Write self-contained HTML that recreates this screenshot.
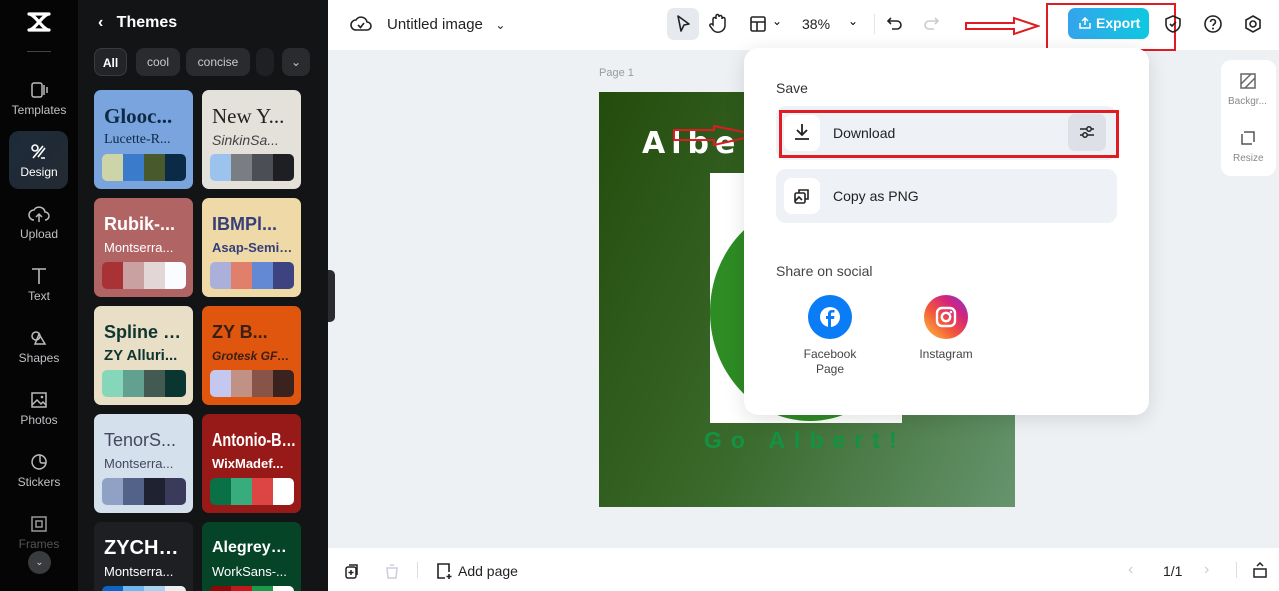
<!DOCTYPE html>
<html style="overflow:hidden;height:591px"><head><meta charset="utf-8"><style>
*{box-sizing:border-box;margin:0;padding:0}
body{width:1279px;height:591px;overflow:hidden;position:relative;font-family:"Liberation Sans",sans-serif;background:#eef1f4}
.a{position:absolute}
.rail{left:0;top:0;width:78px;height:591px;background:#050505}
.ri{position:absolute;left:0;width:78px;text-align:center;color:#bfc1c6;font-size:12px}
.ri svg{display:block;margin:0 auto 3px}
.panel{left:78px;top:0;width:250px;height:591px;background:#131416;overflow:hidden}
.chip{position:absolute;top:48px;height:28px;border-radius:8px;background:#2a2b2f;color:#c9cacd;font-size:12px;line-height:28px;text-align:center}
.card{position:absolute;width:99px;height:99px;border-radius:7px;overflow:hidden;padding:14px 8px 0 10px}
.card .t{font-size:18px;font-weight:bold;white-space:nowrap;overflow:hidden;text-overflow:ellipsis;line-height:24px}
.card .s{font-size:13px;white-space:nowrap;overflow:hidden;text-overflow:ellipsis;line-height:20px;margin-top:2px}
.sw{position:absolute;left:8px;top:64px;width:84px;height:27px;border-radius:5px;overflow:hidden;display:flex}
.sw i{flex:1}
.top{left:328px;top:0;width:951px;height:50px;background:#fff}
.bot{left:328px;top:548px;width:951px;height:43px;background:#fff}
.row{position:absolute;left:776px;width:341px;height:54px;background:#eef1f5;border-radius:10px}
.ib{position:absolute;left:8px;top:9px;width:36px;height:36px;background:#fff;border-radius:8px}
</style></head><body>
<div class="a rail">
 <svg class="a" style="left:27px;top:11px" width="24" height="22" viewBox="0 0 24 22"><path d="M2 3h20M2 19h20M2 3c6 0 14 16 20 16M22 3C16 3 8 19 2 19" stroke="#fff" stroke-width="3.2" fill="none" stroke-linecap="round"/></svg>
 <div class="a" style="left:27px;top:51px;width:24px;height:1px;background:#444"></div>
 <div class="ri" style="top:80px"><svg width="20" height="20" viewBox="0 0 20 20"><rect x="3" y="3" width="10" height="14" rx="2" stroke="#bbb" fill="none" stroke-width="1.5"/><path d="M15 5v10M18 7v6" stroke="#bbb" stroke-width="1.5"/></svg>Templates</div>
 <div class="a" style="left:9px;top:131px;width:59px;height:58px;border-radius:10px;background:linear-gradient(135deg,#1c2b3a,#242a32)"></div>
 <div class="ri" style="top:142px;color:#fff"><svg width="20" height="20" viewBox="0 0 20 20"><circle cx="6" cy="6" r="3" stroke="#fff" fill="none" stroke-width="1.6"/><path d="M9 15l7-9M4 16l10-12M12 16l4 0" stroke="#fff" stroke-width="1.6" fill="none"/></svg>Design</div>
 <div class="ri" style="top:204px"><svg width="22" height="20" viewBox="0 0 22 20"><path d="M6 16a5 5 0 010-10 6 6 0 0111 2 4 4 0 010 8M11 10v8M8 13l3-3 3 3" stroke="#bbb" fill="none" stroke-width="1.5"/></svg>Upload</div>
 <div class="ri" style="top:266px"><svg width="20" height="20" viewBox="0 0 20 20"><path d="M3 3h14M10 3v15" stroke="#bbb" stroke-width="1.6"/></svg>Text</div>
 <div class="ri" style="top:328px"><svg width="20" height="20" viewBox="0 0 20 20"><circle cx="7" cy="8" r="4" stroke="#bbb" fill="none" stroke-width="1.5"/><path d="M10 6l6 10H6z" stroke="#bbb" fill="none" stroke-width="1.5"/></svg>Shapes</div>
 <div class="ri" style="top:390px"><svg width="20" height="20" viewBox="0 0 20 20"><rect x="3" y="3" width="14" height="14" stroke="#bbb" fill="none" stroke-width="1.5"/><path d="M3 15l5-5 4 4 2-2 3 3" stroke="#bbb" fill="none" stroke-width="1.5"/><circle cx="13" cy="7" r="1.3" fill="#bbb"/></svg>Photos</div>
 <div class="ri" style="top:452px"><svg width="20" height="20" viewBox="0 0 20 20"><path d="M17 11A7 7 0 1111 3a7 7 0 016 8zM17 11h-4a2 2 0 01-2-2V3" stroke="#bbb" fill="none" stroke-width="1.5"/></svg>Stickers</div>
 <div class="ri" style="top:514px;color:#555"><svg width="20" height="20" viewBox="0 0 20 20"><rect x="3" y="3" width="14" height="14" stroke="#999" fill="none" stroke-width="1.5"/><rect x="7" y="7" width="6" height="6" stroke="#999" fill="none" stroke-width="1.5"/></svg>Frames</div>
 <div class="a" style="left:28px;top:551px;width:23px;height:23px;border-radius:50%;background:#3a3b3f;color:#ccc;font-size:10px;text-align:center;line-height:23px">&#8964;</div>
</div>
<div class="a panel">
 <div class="a" style="left:20px;top:14px;color:#fff;font-size:16px;font-weight:bold">&lsaquo;&nbsp;&nbsp; Themes</div>
 <div class="chip" style="left:16px;width:33px;background:#232428;border:1px solid #3a3b3f;color:#fff;font-weight:bold">All</div>
 <div class="chip" style="left:58px;width:44px">cool</div>
 <div class="chip" style="left:108px;width:64px">concise</div>
 <div class="chip" style="left:178px;width:18px;background:#1f2023"></div>
 <div class="chip" style="left:204px;width:28px">&#8964;</div>
 <div class="card" style="left:16px;top:90px;background:#79a4dd;color:#0f2a46"><div class="t" style="font-family:'Liberation Serif',serif;font-size:21px">Glooc...</div><div class="s" style="font-family:'Liberation Serif',serif;font-size:14px">Lucette-R...</div><div class="sw"><i style="background:#ccd4a8"></i><i style="background:#3a7bcb"></i><i style="background:#485a2b"></i><i style="background:#0b2a45"></i></div></div>
 <div class="card" style="left:124px;top:90px;background:#e4e0da;color:#222"><div class="t" style="font-family:'Liberation Serif',serif;font-weight:normal;font-size:21px">New Y...</div><div class="s" style="font-style:italic;color:#444;font-size:14px">SinkinSa...</div><div class="sw"><i style="background:#9cc3ee"></i><i style="background:#7a7d82"></i><i style="background:#4b4e54"></i><i style="background:#1d1f23"></i></div></div>
 <div class="card" style="left:16px;top:198px;background:#b16464;color:#fff"><div class="t">Rubik-...</div><div class="s">Montserra...</div><div class="sw"><i style="background:#a93237"></i><i style="background:#c9a1a1"></i><i style="background:#e3d6d6"></i><i style="background:#fbfcff"></i></div></div>
 <div class="card" style="left:124px;top:198px;background:#eed9a7;color:#363f7a"><div class="t">IBMPl...</div><div class="s" style="font-weight:bold">Asap-SemiB...</div><div class="sw"><i style="background:#aab0d9"></i><i style="background:#e17f6d"></i><i style="background:#6489d4"></i><i style="background:#3c4380"></i></div></div>
 <div class="card" style="left:16px;top:306px;background:#e8dfc6;color:#0f3530"><div class="t">Spline S...</div><div class="s" style="font-weight:bold;font-size:15px">ZY Alluri...</div><div class="sw"><i style="background:#86d6b9"></i><i style="background:#62a08f"></i><i style="background:#425a52"></i><i style="background:#0b3530"></i></div></div>
 <div class="card" style="left:124px;top:306px;background:#e0560e;color:#3a1f14"><div class="t">ZY B...</div><div class="s" style="font-style:italic;font-weight:bold;font-size:12px">Grotesk GF-B...</div><div class="sw"><i style="background:#c5c8ee"></i><i style="background:#c29185"></i><i style="background:#875447"></i><i style="background:#3a231e"></i></div></div>
 <div class="card" style="left:16px;top:414px;background:#d4e0ec;color:#44485e"><div class="t" style="font-weight:normal">TenorS...</div><div class="s">Montserra...</div><div class="sw"><i style="background:#8fa2c5"></i><i style="background:#536288"></i><i style="background:#1f2230"></i><i style="background:#3a3b5b"></i></div></div>
 <div class="card" style="left:124px;top:414px;background:#981a18;color:#fff;padding-right:2px"><div class="t" style="font-size:18px;transform:scaleX(.8);transform-origin:left;width:110px">Antonio-Bold</div><div class="s" style="font-weight:bold">WixMadef...</div><div class="sw"><i style="background:#0a7045"></i><i style="background:#38ac7c"></i><i style="background:#dd4545"></i><i style="background:#fff"></i></div></div>
 <div class="card" style="left:16px;top:522px;background:#1d1f22;color:#fff"><div class="t" style="font-size:20px">ZYCHE...</div><div class="s">Montserra...</div><div class="sw"><i style="background:#0a66c2"></i><i style="background:#6cb7ef"></i><i style="background:#a8d2f2"></i><i style="background:#eee"></i></div></div>
 <div class="card" style="left:124px;top:522px;background:#064428;color:#fff"><div class="t" style="font-size:16px">AlegreyaS...</div><div class="s">WorkSans-...</div><div class="sw"><i style="background:#8a0a0a"></i><i style="background:#c01a1a"></i><i style="background:#1b9a4b"></i><i style="background:#fff"></i></div></div>
</div>
<div class="a" style="left:328px;top:270px;width:7px;height:52px;background:#2a2b2f;border-radius:0 5px 5px 0"></div>
<div class="a top">
 <svg class="a" style="left:22px;top:14px" width="22" height="20" viewBox="0 0 22 20"><path d="M6 16a5 5 0 010-10 6 6 0 0111 2 4 4 0 010 8z" stroke="#222" fill="none" stroke-width="1.6"/><path d="M8 11l2.5 2.5L14 9" stroke="#222" fill="none" stroke-width="1.6"/></svg>
 <div class="a" style="left:59px;top:16px;font-size:15px;color:#222">Untitled image &nbsp;&nbsp;<span style="font-size:12px">&#8964;</span></div>
 <div class="a" style="left:339px;top:8px;width:32px;height:32px;border-radius:7px;background:#e6e9ee"></div>
 <svg class="a" style="left:346px;top:14px" width="18" height="20" viewBox="0 0 18 20"><path d="M4 2l11 8-5 1-3 6z" stroke="#222" fill="none" stroke-width="1.6" stroke-linejoin="round"/></svg>
 <svg class="a" style="left:380px;top:13px" width="20" height="22" viewBox="0 0 20 22"><path d="M5 12V6a1.5 1.5 0 013 0V3a1.5 1.5 0 013 0v1a1.5 1.5 0 013 0v2a1.5 1.5 0 013 0v7a7 7 0 01-12 4l-3-4a1.5 1.5 0 012-2z" stroke="#222" fill="none" stroke-width="1.5"/></svg>
 <svg class="a" style="left:421px;top:15px" width="18" height="18" viewBox="0 0 18 18"><rect x="2" y="2" width="14" height="14" rx="1.5" stroke="#222" fill="none" stroke-width="1.6"/><path d="M2 7h14M8 7v9" stroke="#222" stroke-width="1.6"/></svg>
 <div class="a" style="left:444px;top:14px;font-size:12px">&#8964;</div>
 <div class="a" style="left:474px;top:16px;font-size:14px;color:#222">38%</div>
 <div class="a" style="left:520px;top:14px;font-size:12px">&#8964;</div>
 <div class="a" style="left:546px;top:14px;width:1px;height:20px;background:#e2e4e8"></div>
 <svg class="a" style="left:558px;top:15px" width="18" height="18" viewBox="0 0 18 18"><path d="M5 3L2 6l3 3M2 6h9a4 4 0 010 8H6" stroke="#222" fill="none" stroke-width="1.6"/></svg>
 <svg class="a" style="left:594px;top:15px" width="18" height="18" viewBox="0 0 18 18"><path d="M13 3l3 3-3 3M16 6H7a4 4 0 000 8h5" stroke="#ccc" fill="none" stroke-width="1.6"/></svg>
 <svg class="a" style="left:636px;top:16px" width="76" height="20" viewBox="0 0 76 20"><path d="M2 7h48V2l24 8-24 8v-5H2z" stroke="#e01b22" fill="none" stroke-width="2"/></svg>
 <div class="a" style="left:718px;top:3px;width:130px;height:48px;border:2px solid #e01b22"></div>
 <div class="a" style="left:740px;top:8px;width:81px;height:31px;border-radius:7px;background:linear-gradient(90deg,#34a4ec,#0fc8e0);color:#fff;font-weight:bold;font-size:14px;line-height:31px;padding-left:28px">Export</div>
 <svg class="a" style="left:750px;top:16px" width="14" height="14" viewBox="0 0 14 14"><path d="M2 7v5h10V7M7 9V2M4 5l3-3 3 3" stroke="#fff" fill="none" stroke-width="1.5"/></svg>
 <svg class="a" style="left:836px;top:14px" width="18" height="20" viewBox="0 0 18 20"><path d="M9 2l7 3v5c0 4-3 7-7 8-4-1-7-4-7-8V5z" stroke="#222" fill="none" stroke-width="1.6"/><path d="M6 10l2 2 4-4" stroke="#222" fill="none" stroke-width="1.6"/></svg>
 <svg class="a" style="left:875px;top:14px" width="20" height="20" viewBox="0 0 20 20"><circle cx="10" cy="10" r="8" stroke="#222" fill="none" stroke-width="1.6"/><path d="M7.5 8a2.5 2.5 0 115 0c0 2-2.5 2-2.5 4" stroke="#222" fill="none" stroke-width="1.6"/><circle cx="10" cy="14.5" r="1" fill="#222"/></svg>
 <svg class="a" style="left:915px;top:14px" width="20" height="20" viewBox="0 0 20 20"><path d="M10 2l7 4v8l-7 4-7-4V6z" stroke="#222" fill="none" stroke-width="1.6"/><circle cx="10" cy="10" r="3" stroke="#222" fill="none" stroke-width="1.6"/></svg>
</div>
<div class="a" style="left:599px;top:67px;font-size:11px;color:#999">Page 1</div>
<div class="a" style="left:599px;top:92px;width:416px;height:415px;background:linear-gradient(115deg,#244c0c 0%,#3a6a2c 50%,#66946e 100%)"></div>
<div class="a" style="left:642px;top:126px;font-size:30px;font-weight:bold;color:#fff;letter-spacing:6px;font-family:'DejaVu Sans',sans-serif">Albe</div>
<div class="a" style="left:710px;top:173px;width:192px;height:250px;background:#fff"></div>
<div class="a" style="left:710px;top:203px;width:200px;height:218px;border-radius:50%;background:#2d8c24"></div>
<div class="a" style="left:704px;top:427px;font-size:23px;font-weight:bold;color:#149243;letter-spacing:9px">Go Albert!</div>
<svg class="a" style="left:672px;top:125px" width="90" height="22" viewBox="0 0 90 22"><path d="M2 5h40V1l44 9-44 10v-5H2z" stroke="#e01b22" fill="none" stroke-width="2"/></svg>
<div class="a" style="left:744px;top:48px;width:405px;height:367px;background:#fff;border-radius:14px;box-shadow:0 4px 20px rgba(0,0,0,.12)"></div>
<div class="a" style="left:776px;top:80px;font-size:14px;color:#333">Save</div>
<div class="row" style="top:106px"><div class="ib"></div>
 <svg class="a" style="left:16px;top:16px" width="20" height="20" viewBox="0 0 20 20"><path d="M10 2v11M5 8l5 5 5-5M3 17h14" stroke="#222" fill="none" stroke-width="1.8"/></svg>
 <div class="a" style="left:57px;top:19px;font-size:14px;color:#222">Download</div>
 <div class="a" style="left:292px;top:8px;width:38px;height:37px;border-radius:7px;background:#dde1e7"></div>
 <svg class="a" style="left:302px;top:17px" width="18" height="18" viewBox="0 0 18 18"><path d="M2 6h14M2 12h14" stroke="#222" stroke-width="1.6"/><circle cx="11" cy="6" r="2.2" fill="#dde1e7" stroke="#222" stroke-width="1.5"/><circle cx="7" cy="12" r="2.2" fill="#dde1e7" stroke="#222" stroke-width="1.5"/></svg>
</div>
<div class="a" style="left:779px;top:110px;width:340px;height:48px;border:3px solid #e01b22"></div>
<div class="row" style="top:169px"><div class="ib"></div>
 <svg class="a" style="left:17px;top:18px" width="18" height="18" viewBox="0 0 18 18"><rect x="2" y="6" width="10" height="10" rx="1.5" stroke="#222" fill="none" stroke-width="1.6"/><path d="M6 6V3h9v9h-3M2 14l4-4 3 3" stroke="#222" fill="none" stroke-width="1.6"/></svg>
 <div class="a" style="left:57px;top:19px;font-size:14px;color:#222">Copy as PNG</div>
</div>
<div class="a" style="left:776px;top:263px;font-size:14px;color:#444">Share on social</div>
<div class="a" style="left:808px;top:295px;width:44px;height:44px;border-radius:50%;background:#0a7cf5"></div>
<svg class="a" style="left:818px;top:305px" width="24" height="24" viewBox="0 0 24 24"><circle cx="12" cy="12" r="10" fill="#fff"/><path d="M13 22v-8h3l.5-3H13V9c0-1 .4-1.5 1.5-1.5H16.5V5h-2.5C11.5 5 10 6.5 10 9v2H8v3h2v8z" fill="#0a7cf5"/></svg>
<div class="a" style="left:790px;top:347px;width:80px;text-align:center;font-size:12px;color:#444;line-height:15px">Facebook<br>Page</div>
<div class="a" style="left:924px;top:295px;width:44px;height:44px;border-radius:50%;background:linear-gradient(45deg,#fdc440 0%,#f3563a 40%,#d4247d 70%,#7d3ad0 100%)"></div>
<svg class="a" style="left:933px;top:304px" width="26" height="26" viewBox="0 0 26 26"><rect x="4" y="4" width="18" height="18" rx="5" stroke="#fff" fill="none" stroke-width="2.4"/><circle cx="13" cy="13" r="4.2" stroke="#fff" fill="none" stroke-width="2.4"/><circle cx="18" cy="8" r="1.3" fill="#fff"/></svg>
<div class="a" style="left:906px;top:347px;width:80px;text-align:center;font-size:12px;color:#444">Instagram</div>
<div class="a" style="left:1221px;top:60px;width:55px;height:116px;background:#fff;border-radius:10px"></div>
<svg class="a" style="left:1240px;top:73px" width="16" height="16" viewBox="0 0 16 16"><rect x="1" y="1" width="14" height="14" stroke="#666" fill="none" stroke-width="1.5"/><path d="M1 11L11 1M5 15L15 5" stroke="#666" stroke-width="1.5"/></svg>
<div class="a" style="left:1228px;top:96px;font-size:10px;color:#888">Backgr...</div>
<svg class="a" style="left:1240px;top:130px" width="16" height="16" viewBox="0 0 16 16"><path d="M2 4v10h10M4 2h10v10" stroke="#555" fill="none" stroke-width="1.5"/></svg>
<div class="a" style="left:1233px;top:153px;font-size:10px;color:#888">Resize</div>
<div class="a bot">
 <svg class="a" style="left:16px;top:15px" width="16" height="16" viewBox="0 0 16 16"><rect x="2" y="4" width="10" height="11" rx="2" stroke="#222" fill="none" stroke-width="1.5"/><path d="M5 2h8v10M7 7v5M4.5 9.5h5" stroke="#222" fill="none" stroke-width="1.5"/></svg>
 <svg class="a" style="left:56px;top:15px" width="16" height="16" viewBox="0 0 16 16"><path d="M3 5h10l-1 10H4zM6 2h4" stroke="#ccd" fill="none" stroke-width="1.5"/></svg>
 <div class="a" style="left:89px;top:14px;width:1px;height:16px;background:#ddd"></div>
 <svg class="a" style="left:107px;top:14px" width="18" height="18" viewBox="0 0 18 18"><path d="M10 16H3V2h11v8M14 12v5M11.5 14.5h5" stroke="#222" fill="none" stroke-width="1.6"/></svg>
 <div class="a" style="left:130px;top:15px;font-size:14px;color:#222">Add page</div>
 <div class="a" style="left:800px;top:13px;font-size:16px;color:#ccc">&lsaquo;</div>
 <div class="a" style="left:835px;top:15px;font-size:14px;color:#222">1/1</div>
 <div class="a" style="left:876px;top:13px;font-size:16px;color:#ccc">&rsaquo;</div>
 <div class="a" style="left:908px;top:14px;width:1px;height:16px;background:#ddd"></div>
 <svg class="a" style="left:924px;top:13px" width="16" height="18" viewBox="0 0 16 18"><rect x="2" y="8" width="12" height="8" stroke="#222" fill="none" stroke-width="1.5"/><path d="M5 5l3-3 3 3" stroke="#222" fill="none" stroke-width="1.5"/></svg>
</div>
</body></html>
